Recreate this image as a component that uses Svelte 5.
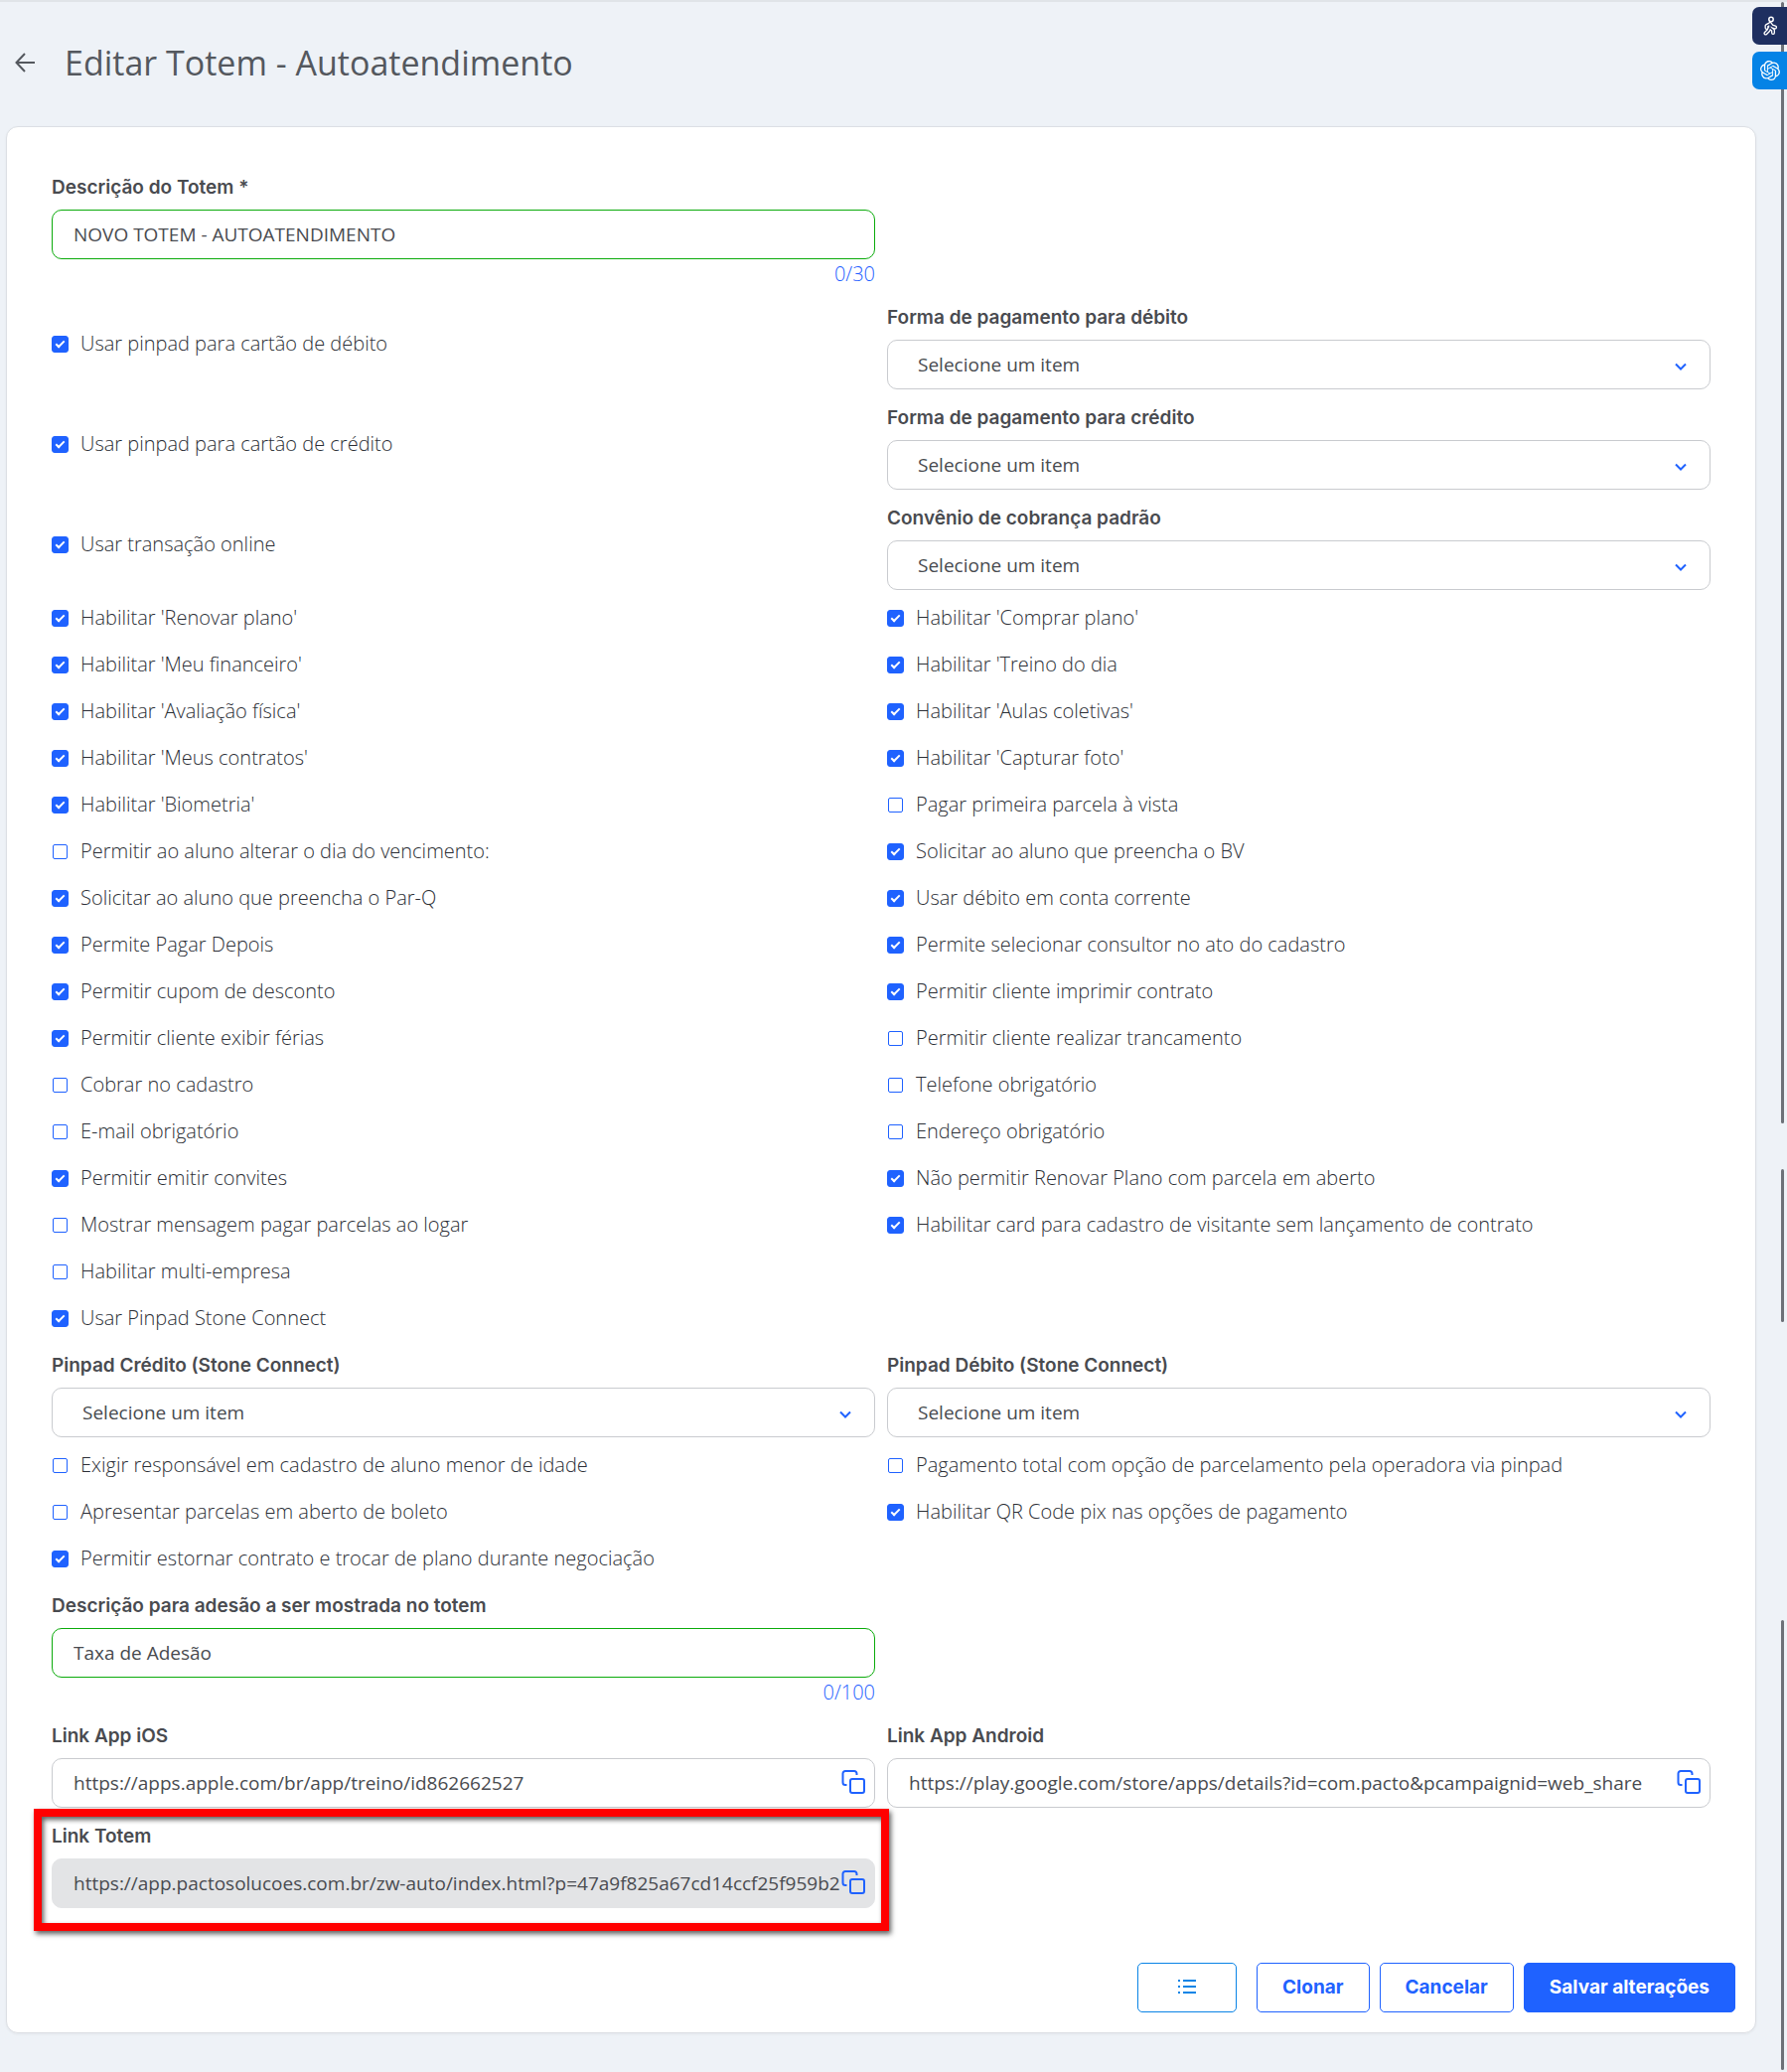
<script>
	const item = "Selecione um item";

	// [label, checked]
	const options = [
		["Habilitar 'Renovar plano'", true],
		["Habilitar 'Comprar plano'", true],
		["Habilitar 'Meu financeiro'", true],
		["Habilitar 'Treino do dia", true],
		["Habilitar 'Avaliação física'", true],
		["Habilitar 'Aulas coletivas'", true],
		["Habilitar 'Meus contratos'", true],
		["Habilitar 'Capturar foto'", true],
		["Habilitar 'Biometria'", true],
		["Pagar primeira parcela à vista", false],
		["Permitir ao aluno alterar o dia do vencimento:", false],
		["Solicitar ao aluno que preencha o BV", true],
		["Solicitar ao aluno que preencha o Par-Q", true],
		["Usar débito em conta corrente", true],
		["Permite Pagar Depois", true],
		["Permite selecionar consultor no ato do cadastro", true],
		["Permitir cupom de desconto", true],
		["Permitir cliente imprimir contrato", true],
		["Permitir cliente exibir férias", true],
		["Permitir cliente realizar trancamento", false],
		["Cobrar no cadastro", false],
		["Telefone obrigatório", false],
		["E-mail obrigatório", false],
		["Endereço obrigatório", false],
		["Permitir emitir convites", true],
		["Não permitir Renovar Plano com parcela em aberto", true],
		["Mostrar mensagem pagar parcelas ao logar", false],
		["Habilitar card para cadastro de visitante sem lançamento de contrato", true],
		["Habilitar multi-empresa", false],
		null,
		["Usar Pinpad Stone Connect", true],
		null,
	];

	const extraOptions = [
		["Exigir responsável em cadastro de aluno menor de idade", false],
		["Pagamento total com opção de parcelamento pela operadora via pinpad", false],
		["Apresentar parcelas em aberto de boleto", false],
		["Habilitar QR Code pix nas opções de pagamento", true],
		["Permitir estornar contrato e trocar de plano durante negociação", true],
		null,
	];

	function copy(text) {
		navigator.clipboard?.writeText(text);
	}
</script>

{#snippet check(option)}
	{#if option}
		<label class="check">
			<input type="checkbox" checked={option[1]} />
			<span>{option[0]}</span>
		</label>
	{:else}
		<span></span>
	{/if}
{/snippet}

{#snippet select(id, label)}
	<div class="field">
		<label for={id}>{label}</label>
		<div class="control">
			<select {id}>
				<option>{item}</option>
			</select>
			<svg class="chevron" width="12" height="8" viewBox="0 0 12 8" aria-hidden="true">
				<path d="M1 1.5 6 6.5 11 1.5" />
			</svg>
		</div>
	</div>
{/snippet}

{#snippet text(id, label, value, max)}
	<div class="field">
		<label for={id}>{label}</label>
		<input {id} class="valid" type="text" {value} />
		<span class="counter">0/{max}</span>
	</div>
{/snippet}

{#snippet link(id, label, value, disabled)}
	<div class="field">
		<label for={id}>{label}</label>
		<div class="control">
			<input {id} type="text" {value} {disabled} />
			<button class="copy" type="button" aria-label="Copiar" onclick={() => copy(value)}>
				<svg width="24" height="24" viewBox="0 0 24 24" aria-hidden="true">
					<rect x="9" y="9" width="14" height="14" rx="2" />
					<path d="M5.500 15H4a2.500 2.500 0 0 1-2.500-2.500v-9A2.500 2.500 0 0 1 4 1h9a2.500 2.500 0 0 1 2.500 2.500V5" />
				</svg>
			</button>
		</div>
	</div>
{/snippet}

<div class="page">
	<header>
		<button class="back" type="button" aria-label="Voltar">
			<svg width="20" height="20" viewBox="0 0 20 20" aria-hidden="true">
				<path d="M20 10H2M10 1 1.500 10 10 19" />
			</svg>
		</button>
		<h1>Editar Totem - Autoatendimento</h1>
	</header>

	<main>
		<form>
			{@render text("descricao", "Descrição do Totem *", "NOVO TOTEM - AUTOATENDIMENTO", 30)}
			<span></span>

			{@render check(["Usar pinpad para cartão de débito", true])}
			{@render select("debito", "Forma de pagamento para débito")}
			{@render check(["Usar pinpad para cartão de crédito", true])}
			{@render select("credito", "Forma de pagamento para crédito")}
			{@render check(["Usar transação online", true])}
			{@render select("convenio", "Convênio de cobrança padrão")}

			{#each options as option}
				{@render check(option)}
			{/each}

			{@render select("pinpad-credito", "Pinpad Crédito (Stone Connect)")}
			{@render select("pinpad-debito", "Pinpad Débito (Stone Connect)")}

			{#each extraOptions as option}
				{@render check(option)}
			{/each}

			{@render text("adesao", "Descrição para adesão a ser mostrada no totem", "Taxa de Adesão", 100)}
			<span></span>

			{@render link("ios", "Link App iOS", "https://apps.apple.com/br/app/treino/id862662527", false)}
			{@render link("android", "Link App Android", "https://play.google.com/store/apps/details?id=com.pacto&pcampaignid=web_share", false)}

			<div class="marked">
				{@render link("totem", "Link Totem", "https://app.pactosolucoes.com.br/zw-auto/index.html?p=47a9f825a67cd14ccf25f959b2", true)}
			</div>
		</form>

		<footer>
			<button class="log" type="button" aria-label="Log">
				<svg width="18" height="18" viewBox="0 0 18 18" aria-hidden="true">
					<path d="M5 2H18M5 8H18M5 14H18M0 2H2M0 8H2M0 14H2" />
				</svg>
			</button>
			<button type="button">Clonar</button>
			<button type="button">Cancelar</button>
			<button class="primary" type="submit">Salvar alterações</button>
		</footer>
	</main>

	<aside>
		<button class="walk" type="button" aria-label="Acessibilidade">
			<svg width="14" height="20" viewBox="0 0 14 20" aria-hidden="true">
				<circle cx="8" cy="3.500" r="2.200" />
				<path class="body" d="M7 8 3.500 10v2M7 8l2 2.500 3 1M7 8v4l3 2.500V17M6.500 12 5.500 14.500 2.500 17.500" />
				<path class="inside" d="M7 8 3.500 10v2M7 8l2 2.500 3 1M7 8v4l3 2.500V17M6.500 12 5.500 14.500 2.500 17.500" />
			</svg>
		</button>
		<button class="ai" type="button" aria-label="Assistente">
			<svg width="20" height="20" viewBox="0 0 24 24" aria-hidden="true">
				<path d="M22.2819 9.8211a5.9847 5.9847 0 0 0-.5157-4.9108 6.0462 6.0462 0 0 0-6.5098-2.9A6.0651 6.0651 0 0 0 4.9807 4.1818a5.9847 5.9847 0 0 0-3.9977 2.9 6.0462 6.0462 0 0 0 .7427 7.0966 5.98 5.98 0 0 0 .511 4.9107 6.051 6.051 0 0 0 6.5146 2.9001A5.9847 5.9847 0 0 0 13.2599 24a6.0557 6.0557 0 0 0 5.7718-4.2058 5.9894 5.9894 0 0 0 3.9977-2.9001 6.0557 6.0557 0 0 0-.7475-7.0729zm-9.022 12.6081a4.4755 4.4755 0 0 1-2.8764-1.0408l.1419-.0804 4.7783-2.7582a.7948.7948 0 0 0 .3927-.6813v-6.7369l2.02 1.1686a.071.071 0 0 1 .038.052v5.5826a4.504 4.504 0 0 1-4.4945 4.4944zm-9.6607-4.1254a4.4708 4.4708 0 0 1-.5346-3.0137l.142.0852 4.783 2.7582a.7712.7712 0 0 0 .7806 0l5.8428-3.3685v2.3324a.0804.0804 0 0 1-.0332.0615L9.74 19.9502a4.4992 4.4992 0 0 1-6.1408-1.6464zM2.3408 7.8956a4.485 4.485 0 0 1 2.3655-1.9728V11.6a.7664.7664 0 0 0 .3879.6765l5.8144 3.3543-2.0201 1.1685a.0757.0757 0 0 1-.071 0l-4.8303-2.7865A4.504 4.504 0 0 1 2.3408 7.872zm16.5963 3.8558L13.1038 8.364 15.1192 7.2a.0757.0757 0 0 1 .071 0l4.8303 2.7913a4.4944 4.4944 0 0 1-.6765 8.1042v-5.6772a.79.79 0 0 0-.407-.667zm2.0107-3.0231l-.142-.0852-4.7735-2.7818a.7759.7759 0 0 0-.7854 0L9.409 9.2297V6.8974a.0662.0662 0 0 1 .0284-.0615l4.8303-2.7866a4.4992 4.4992 0 0 1 6.6802 4.66zM8.3065 12.863l-2.02-1.1638a.0804.0804 0 0 1-.038-.0567V6.0742a4.4992 4.4992 0 0 1 7.3757-3.4537l-.142.0805L8.704 5.459a.7948.7948 0 0 0-.3927.6813zm1.0976-2.3654l2.602-1.4998 2.6069 1.4998v2.9994l-2.5974 1.4997-2.6067-1.4997Z" />
			</svg>
		</button>
	</aside>

	<div class="rail" aria-hidden="true">
		<i class="first"></i>
		<i class="second"></i>
		<i class="third"></i>
	</div>
</div>

<style>
	:global(body) {
		background: #eef2f7;
	}

	.page {
		position: relative;
		padding: 0 31px 40px 6px;
		border-top: 2px solid #e0e4e8;
		color: #494b50;
		font-family: "Open Sans", sans-serif;
		font-size: 19px;
		font-weight: 300;
	}

	header {
		display: flex;
		align-items: center;
		gap: 30px;
		height: 125px;
		padding: 0 9px 4px;
		box-sizing: border-box;
	}

	h1 {
		margin: 0;
		color: #54585e;
		font-size: 34px;
		font-weight: 400;
	}

	button {
		font-family: "Inter", sans-serif;
		cursor: pointer;
	}

	svg {
		display: block;
		fill: none;
		stroke: currentColor;
		stroke-width: 2;
	}

	.back {
		padding: 0;
		border: 0;
		background: none;
		color: #54585e;
	}

	main {
		padding: 37px 20px 20px 45px;
		border: 1px solid #dcdfe4;
		border-radius: 12px;
		background: #fff;
		box-shadow: 0 1px 3px #0000000d;
	}

	form {
		display: grid;
		grid-template-columns: 1fr 1fr;
		column-gap: 12px;
		padding-right: 25px;
	}

	.field {
		display: flex;
		flex-direction: column;
		padding-bottom: 5px;
	}

	.field label {
		padding: 11px 0 9px;
		font-family: "Inter", sans-serif;
		font-size: 19px;
		font-weight: 600;
		line-height: 26px;
	}

	.control {
		position: relative;
	}

	.field input,
	select {
		display: block;
		width: 100%;
		height: 50px;
		padding: 0 21px;
		box-sizing: border-box;
		border: 1px solid #c9cbcf;
		border-radius: 10px;
		background: #fff;
		color: #494b50;
		font: inherit;
		font-weight: 400;
		appearance: none;
	}

	select {
		padding: 0 30px;
	}

	.field input.valid {
		border-color: #0bab0b;
	}

	.field input:disabled {
		border-color: #e3e4e6;
		background: #e3e4e6;
	}

	.counter {
		align-self: flex-end;
		font-size: 20px;
		line-height: 30px;
		color: #1f62ff;
	}

	.chevron {
		position: absolute;
		top: 23px;
		right: 24px;
		color: #1f62ff;
		pointer-events: none;
	}

	.copy {
		position: absolute;
		top: 12px;
		right: 10px;
		padding: 0;
		border: 0;
		background: none;
		color: #1f62ff;
	}

	.check {
		display: flex;
		align-items: center;
		gap: 12px;
		min-height: 47px;
		color: #2c2f36;
		font-size: 20px;
	}

	.check span {
		padding-bottom: 3px;
	}

	.check input {
		width: 15px;
		height: 15px;
		margin: 1px;
		border: 1px solid #1f62ff;
		border-radius: 2px;
		background: #fff;
		appearance: none;
	}

	.check input:checked {
		width: 17px;
		height: 17px;
		margin: 0;
		border-radius: 3px;
		background: #1f62ff;
	}

	.check input:checked::before {
		content: "";
		display: block;
		width: 7px;
		height: 3px;
		margin: 4px 0 0 3px;
		border: solid #fff;
		border-width: 0 0 2px 2px;
		transform: rotate(-45deg);
	}

	.marked {
		position: relative;
	}

	/* frame that draws attention to the totem link */
	.marked::after {
		content: "";
		position: absolute;
		inset: -4px -14px -18px -18px;
		border: 8px solid #f00;
		box-shadow: 2px 3px 5px #000000a0, inset 2px 3px 5px #000000a0;
		pointer-events: none;
	}

	footer {
		display: flex;
		justify-content: flex-end;
		gap: 10px;
		margin-top: 50px;
	}

	footer button {
		height: 50px;
		padding: 0 25px 2px;
		border: 1px solid #1f62ff;
		border-radius: 5px;
		background: #fff;
		color: #1f62ff;
		font-size: 19px;
		font-weight: 700;
	}

	footer .log {
		width: 100px;
		margin-right: 10px;
		padding: 0 40px;
		border-color: #0a84e6;
		color: #0a84e6;
	}

	footer .primary {
		background: #1f62ff;
		color: #fff;
	}

	aside {
		position: absolute;
		z-index: 1;
		top: 5px;
		right: 0;
		display: grid;
		gap: 7px;
	}

	aside button {
		display: grid;
		place-items: center;
		width: 35px;
		height: 38px;
		padding: 0;
		border: 0;
		border-radius: 7px 0 0 7px;
		color: #fff;
	}

	.walk {
		background: #1e2f60;
	}

	.walk circle {
		stroke-width: 1.500;
	}

	.walk path {
		stroke-width: 4;
		stroke-linecap: round;
		stroke-linejoin: round;
	}

	.walk .inside {
		stroke: #1e2f60;
		stroke-width: 1.400;
	}

	.ai {
		background: #0583e6;
	}

	.ai svg {
		fill: currentColor;
		stroke: none;
	}

	.rail {
		position: absolute;
		top: 0;
		right: 3px;
		bottom: 3px;
		display: flex;
		flex-direction: column;
		width: 3px;
	}

	.rail i {
		border-radius: 2px;
		background: #6d7178;
	}

	.first {
		flex: 1130;
	}

	.second {
		flex: 154;
		margin: 46px 0 300px;
	}

	.third {
		flex: 454;
	}
</style>
